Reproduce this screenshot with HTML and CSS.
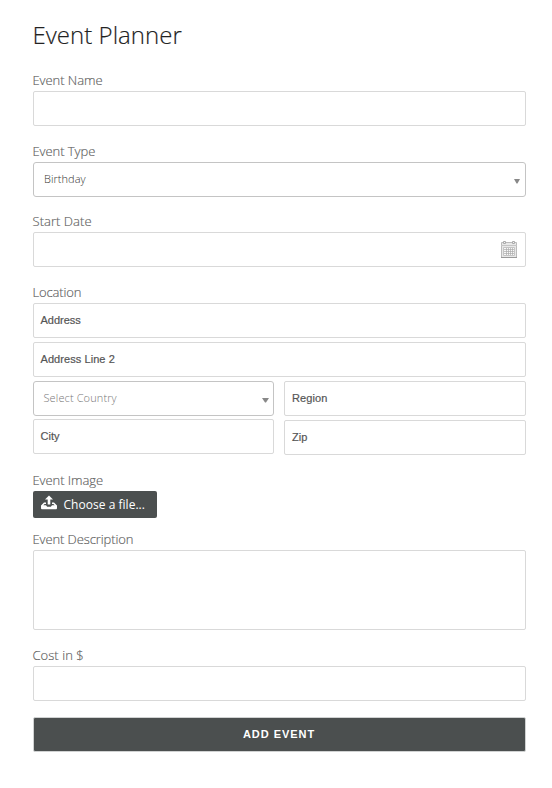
FILE: index.html
```html
<!DOCTYPE html>
<html lang="en">
<head>
<meta charset="utf-8">
<title>Event Planner</title>
<link rel="stylesheet" href="styles.css">
</head>
<body>
<main class="form">
  <h1 class="title">Event Planner</h1>
  <section class="field name">
    <div class="label">Event Name</div>
    <div class="control"></div>
  </section>
  <section class="field">
    <div class="label">Event Type</div>
    <div class="control select"><span class="choice">Birthday</span><svg class="arrow" width="6" height="5" viewBox="0 0 6 5"><path d="M0 0h6L3.5 4.5h-1z"/></svg></div>
  </section>
  <section class="field start">
    <div class="label date-label">Start Date</div>
    <div class="control date">
      <svg width="16" height="17" viewBox="0 0 16 17">
        <path d="M.5 1.5h15v15H.5z" fill="#e8e8e8" stroke="#bbb"/>
        <path d="M0 16.5h16" stroke="#999"/>
        <path d="M0 4.5h16" stroke="#c4c4c4"/>
        <path d="M2.5 .5h2v2h-2zM11.5 .5h2v2h-2z" fill="#f4f4f4" stroke="#aaa"/>
        <path d="M2.5 6.5h11v8h-11z" fill="#f8f8f8" stroke="#c4c4c4"/>
        <path d="M3 8.5h10M3 10.5h10M3 12.5h10M5.5 7v7M7.5 7v7M9.5 7v7M11.5 7v7" fill="none" stroke="#aaa" stroke-width=".7"/>
      </svg>
    </div>
  </section>
  <section class="field location">
    <div class="label location-label">Location</div>
    <div class="control"><span class="placeholder">Address</span></div>
    <div class="control line2"><span class="placeholder wide">Address Line 2</span></div>
    <div class="columns">
      <div class="column">
        <div class="control select"><span class="country">Select Country</span><svg class="arrow country-arrow" width="7" height="5" viewBox="0 0 7 5"><path d="M0 0h7L4 4.5H3z"/></svg></div>
        <div class="control"><span class="placeholder">City</span></div>
      </div>
      <div class="column right">
        <div class="control"><span class="placeholder region">Region</span></div>
        <div class="control"><span class="placeholder region">Zip</span></div>
      </div>
    </div>
  </section>
  <section class="field image">
    <div class="label">Event Image</div>
    <div class="file">
      <svg width="16" height="15" viewBox="0 0 16 15" fill="#fff"><path d="M8 .5l4 4H9.3v5H6.7v-5H4z"/><path d="M3 7.5h2V9H3.6L2.3 10.2H5l1.2 1.6h3.6l1.2-1.6h2.7L12.4 9H11V7.5h2l3 2.9v3l-.7.8H.7l-.7-.8v-3z"/></svg>
      <span>Choose a file...</span>
    </div>
  </section>
  <section class="field description">
    <div class="label description-label">Event Description</div>
    <div class="control area"></div>
  </section>
  <section class="field cost">
    <div class="label date-label">Cost in $</div>
    <div class="control"></div>
  </section>
  <button class="submit" type="button">ADD EVENT</button>
</main>
</body>
</html>
```

FILE: styles.css
```css
* { box-sizing: border-box; }
body { margin: 0; background: #fff; font-family: "Liberation Sans", Arial, sans-serif; }
.form { width: 526px; height: 788px; padding: 18px 0 0 33px; }
.title { margin: 0 0 19px; font: 300 24px/34px "Open Sans", sans-serif; letter-spacing: .03px; color: #222; white-space: nowrap; text-indent: -.5px; -webkit-text-stroke: .15px #222; }
.field { margin-bottom: 15px; }
.name, .location, .description, .cost, .start { margin-bottom: 16px; }
.image { margin-bottom: 12px; }
.label { height: 20px; font: 300 13px/19px "Open Sans", sans-serif; letter-spacing: -.06px; color: #606060; white-space: nowrap; text-indent: -.5px; -webkit-text-stroke: .15px #606060; }
.date-label { letter-spacing: .04px; }
.location-label { letter-spacing: -.15px; }
.description-label { letter-spacing: -.1px; }
.control { height: 35px; border: 1px solid #d9d9d9; border-radius: 2px; padding: 0 7px; display: flex; align-items: center; font-size: 11px; color: #555; white-space: nowrap; }
.placeholder { margin: -2px 0 0 -.5px; -webkit-text-stroke: .2px #555; }
.wide { letter-spacing: .07px; }
.region { letter-spacing: .1px; margin-left: 0; }
.select { justify-content: space-between; border-color: #c4c4c4; border-radius: 3px; padding: 0 5px 0 10px; font: 300 11px "Open Sans", sans-serif; color: #333; }
.choice { margin-top: -2px; letter-spacing: .05px; }
.country { color: #777; letter-spacing: .12px; margin: -2px 0 0 -.5px; }
.arrow { flex: none; margin-top: 4px; fill: #888; }
.country-arrow { margin-right: -1px; }
.date { justify-content: flex-end; padding-right: 8px; }
.line2 { margin-top: 4px; }
.columns { display: grid; grid-template-columns: 241px 242px; column-gap: 10px; margin-top: 4px; }
.column { display: flex; flex-direction: column; gap: 3px; }
.right { gap: 4px; }
.file { width: 124px; height: 27px; background: #4b4f4f; border-radius: 2px; display: flex; align-items: center; padding-left: 8px; gap: 6.5px; color: #fff; font: 500 12px/27px "Open Sans", sans-serif; letter-spacing: .03px; white-space: nowrap; }
.file svg { margin-top: -4px; }
.area { height: 80px; }
.submit { display: block; width: 493px; height: 35px; margin: 0; padding: 0 1px 2px 0; border: 1px solid #d0d2d2; border-radius: 2px; background: #4b4f4f; color: #fff; font: 700 11px "Liberation Sans", Arial, sans-serif; letter-spacing: .95px; }
```
